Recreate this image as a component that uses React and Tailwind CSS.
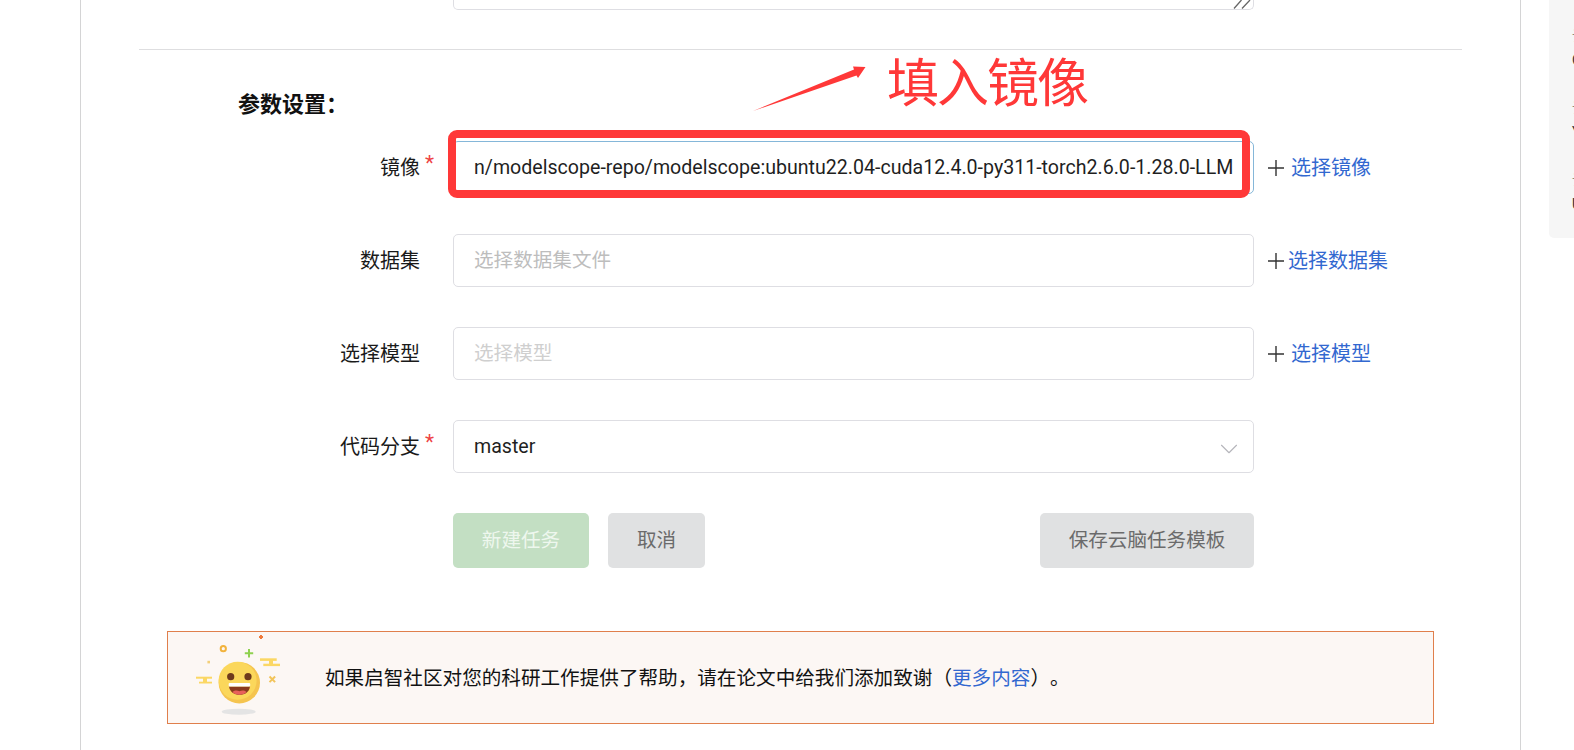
import { ChevronDown } from 'lucide-react'

const inputCls =
  "flex items-center w-[801px] h-[53px] pl-[20px] pr-[21px] rounded-[5px] border border-[#dedee3] bg-white text-[19.6px] text-[#1f1f1f]"

function PlusIcon() {
  return (
    <svg width="16" height="16" viewBox="0 0 16 16" className="shrink-0">
      <path d="M0 8h16M8 0v16" stroke="#333" strokeWidth="1.4" fill="none" />
    </svg>
  )
}

function FormRow({ label, required, action, actionGap, children }) {
  return (
    <div className="flex items-center">
      <div className="w-[314px] shrink-0 pr-[33px] flex justify-end text-[20px] text-[#1a1a1a]">
        <span className="relative">
          {label}
          {required && (
            <span className="absolute left-[calc(100%+5px)] top-[-5px] text-[#ee4444] text-[21px]">*</span>
          )}
        </span>
      </div>
      {children}
      {action && (
        <div className="ml-[14px] flex items-center">
          <PlusIcon />
          <a className={`${actionGap} text-[20px] text-[#3268d0]`}>{action}</a>
        </div>
      )}
    </div>
  )
}

function Smiley() {
  return (
    <svg width="110" height="90" viewBox="0 4 110 90" className="shrink-0">
      <path d="M76 6v4M74 8h4" stroke="#ef7a3c" strokeWidth="2" />
      <circle cx="38.3" cy="19.7" r="2.6" fill="none" stroke="#f2b33d" strokeWidth="2" />
      <path d="M64 20v8.5M59.8 24.3h8.4" stroke="#8fd14f" strokeWidth="2" />
      <rect x="22.4" y="31.8" width="2.6" height="2.6" fill="#f3cf7a" />
      <rect x="75" y="29.3" width="16.7" height="2.6" fill="#fbd764" />
      <rect x="78.3" y="34.7" width="16.7" height="2.4" fill="#fbd764" />
      <rect x="84" y="31" width="4" height="4" fill="#fbd764" />
      <rect x="11" y="47.7" width="16" height="2" fill="#fbd764" />
      <rect x="14" y="52.7" width="13" height="1.8" fill="#fbd764" />
      <rect x="18" y="49" width="4" height="4" fill="#fbd764" />
      <path d="M84.5 47.5l5.6 5.6M90.1 47.5l-5.6 5.6" stroke="#f2c45a" strokeWidth="2" />
      <circle cx="54.3" cy="53.7" r="20.7" fill="#f5c44f" />
      <circle cx="52.6" cy="51.8" r="19" fill="#fbd75b" />
      <circle cx="45.7" cy="47.7" r="3.6" fill="#6f3a1c" />
      <circle cx="63" cy="47.7" r="3.6" fill="#6f3a1c" />
      <path d="M44 57.5h21c-.8 5.6-5 8.3-10.500 8.3S44.800 63 44 57.5z" fill="#8a3a1e" />
      <path d="M47.500 63c2.500-2 4.800-1.500 7-.8 2.200-.7 4.500-1.200 7 .8-1.500 1.800-3.800 2.800-7 2.800s-5.500-1-7-2.800z" fill="#e8605a" />
      <rect x="43.700" y="54" width="21.500" height="3.500" rx="1" fill="#fff" />
      <ellipse cx="53.700" cy="82.700" rx="17" ry="3" fill="#e4e4e4" />
    </svg>
  )
}

function SidePanel() {
  const rows = [
    ['计', 'C'],
    ['计', 'Y'],
    ['计', 'U'],
  ]
  return (
    <div className="ml-[28px] w-[25px] h-[238px] shrink-0 rounded-bl-[5px] bg-[#f6f6f6] pl-[23px] pt-[25px] overflow-hidden text-[14px] leading-[22px] whitespace-nowrap">
      {rows.map(([a, b], i) => (
        <div key={i} className="h-[72px]">
          <div className="text-[#8a8a80]">{a}</div>
          <div className="mt-[2px] text-[#333]">{b}</div>
        </div>
      ))}
    </div>
  )
}

export default function App() {
  return (
    <div className="relative w-[1574px] h-[750px] overflow-hidden bg-white flex items-start font-[Roboto,'Noto_Sans_CJK_SC',sans-serif]">
      <div className="ml-[80px] w-[1441px] h-[750px] shrink-0 border-x border-[#d4d4d5] pl-[58px] pr-[58px]">
        {/* bottom edge of the textarea above */}
        <div className="relative ml-[314px] w-[801px] h-[10px] border-x border-b border-[#dedee3] rounded-b-[5px]">
          <svg width="20" height="9" viewBox="0 0 20 9" className="absolute right-0 top-0">
            <path d="M1 8.500L8.500 0M9 8.500L17 0" stroke="#666" strokeWidth="1.300" fill="none" />
          </svg>
        </div>

        <div className="mt-[39px] border-t border-[#dedee0]" />

        <h3 className="mt-[41px] ml-[99px] text-[22px] leading-[28px] font-bold text-[#111] [text-spacing-trim:space-all]">参数设置：</h3>

        <div className="mt-[22px] flex flex-col gap-[40px]">
          <FormRow label="镜像" required action="选择镜像" actionGap="ml-[7px]">
            <div className={`${inputCls} !border-[#85b7d9] whitespace-nowrap overflow-hidden`}>
              n/modelscope-repo/modelscope:ubuntu22.04-cuda12.4.0-py311-torch2.6.0-1.28.0-LLM
            </div>
          </FormRow>
          <FormRow label="数据集" action="选择数据集" actionGap="ml-[4px]">
            <div className={`${inputCls} !text-[#bdbdbd]`}>选择数据集文件</div>
          </FormRow>
          <FormRow label="选择模型" action="选择模型" actionGap="ml-[7px]">
            <div className={`${inputCls} !text-[#cfcfcf]`}>选择模型</div>
          </FormRow>
          <FormRow label="代码分支" required>
            <div className={`${inputCls} justify-between`}>
              <span>master</span>
              <ChevronDown size={30} strokeWidth={0.9} className="mr-[-12px] mt-[5px] text-[#b5b5bb]" />
            </div>
          </FormRow>
        </div>

        <div className="mt-[40px] ml-[314px] w-[801px] flex items-center gap-[19px] text-[19.6px]">
          <button className="w-[136px] h-[55px] rounded-[5px] bg-[#c3dfc3] text-[#eef7ee]">新建任务</button>
          <button className="w-[97px] h-[55px] rounded-[5px] bg-[#e0e1e2] text-[#6b6b6b]">取消</button>
          <button className="ml-auto w-[214px] h-[55px] rounded-[5px] bg-[#e0e1e2] text-[#6b6b6b]">保存云脑任务模板</button>
        </div>

        <div className="mt-[63px] ml-[28px] w-[1267px] h-[93px] flex items-center pl-[17px] border border-[#e07f4c] bg-[#fcf7f4]">
          <Smiley />
          <p className="ml-[30px] mt-[2px] text-[19.6px] text-[#111] whitespace-nowrap [text-spacing-trim:space-all]">
            如果启智社区对您的科研工作提供了帮助，请在论文中给我们添加致谢（<a className="text-[#3268d0]">更多内容</a>）。
          </p>
        </div>
      </div>

      <SidePanel />

      {/* screenshot annotations drawn on top of the form */}
      <div className="absolute left-[448px] top-[130px] w-[802px] h-[68px] rounded-[9px] border-[8px] border-[#ff3838]" />
      <svg width="130" height="65" viewBox="0 0 130 65" className="absolute left-[745px] top-[55px]">
        <path d="M8 56L109 14.500 108 11.500 120.500 12 113 23 111.500 20.500z" fill="#ff3838" />
      </svg>
      <div className="absolute left-[887px] top-[49px] text-[52px] leading-[72px] tracking-[-2px] text-[#ff3838]">填入镜像</div>
    </div>
  )
}
